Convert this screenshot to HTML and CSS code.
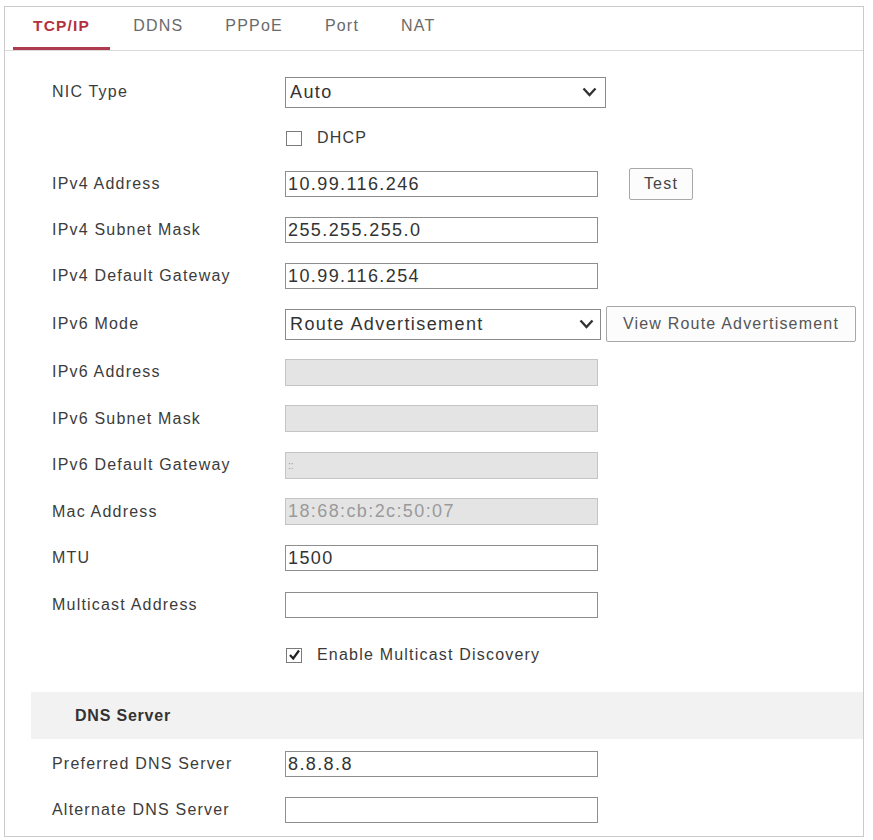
FILE: index.html
```html
<!DOCTYPE html>
<html lang="en">
<head>
<meta charset="utf-8">
<title>TCP/IP</title>
<link rel="stylesheet" href="styles.css">
</head>
<body>
<div class="panel">
  <nav class="tabs">
    <span class="tab active">TCP/IP</span>
    <span class="tab">DDNS</span>
    <span class="tab">PPPoE</span>
    <span class="tab">Port</span>
    <span class="tab">NAT</span>
  </nav>
  <form class="form">
    <div class="row">
      <label class="label">NIC Type</label>
      <div class="select">
        <span>Auto</span>
        <svg class="chev" width="15" height="10" viewBox="0 0 15 10"><polyline points="1.5,1.5 7.5,8 13.5,1.5" fill="none" stroke="#333" stroke-width="2.4"/></svg>
      </div>
    </div>
    <div class="row">
      <span class="label"></span>
      <span class="check"></span><span class="check-text">DHCP</span>
    </div>
    <div class="row">
      <label class="label">IPv4 Address</label>
      <input class="field" type="text" value="10.99.116.246">
      <button type="button" class="btn btn-test">Test</button>
    </div>
    <div class="row">
      <label class="label">IPv4 Subnet Mask</label>
      <input class="field" type="text" value="255.255.255.0">
    </div>
    <div class="row">
      <label class="label">IPv4 Default Gateway</label>
      <input class="field" type="text" value="10.99.116.254">
    </div>
    <div class="row row-tall">
      <label class="label">IPv6 Mode</label>
      <div class="select select-v6">
        <span>Route Advertisement</span>
        <svg class="chev" width="15" height="10" viewBox="0 0 15 10"><polyline points="1.5,1.5 7.5,8 13.5,1.5" fill="none" stroke="#333" stroke-width="2.4"/></svg>
      </div>
      <button type="button" class="btn btn-view">View Route Advertisement</button>
    </div>
    <div class="row row-mid">
      <label class="label">IPv6 Address</label>
      <input class="field" type="text" value="" disabled>
    </div>
    <div class="row row-mid">
      <label class="label">IPv6 Subnet Mask</label>
      <input class="field" type="text" value="" disabled>
    </div>
    <div class="row row-mid">
      <label class="label">IPv6 Default Gateway</label>
      <input class="field field-tiny" type="text" value="::" disabled>
    </div>
    <div class="row row-mid">
      <label class="label">Mac Address</label>
      <input class="field" type="text" value="18:68:cb:2c:50:07" disabled>
    </div>
    <div class="row row-mid">
      <label class="label">MTU</label>
      <input class="field" type="text" value="1500">
    </div>
    <div class="row row-mid">
      <label class="label">Multicast Address</label>
      <input class="field" type="text" value="">
    </div>
    <div class="row row-enable">
      <span class="label"></span>
      <span class="check checked"><svg width="13" height="12" viewBox="0 0 13 12"><polyline points="2,6 5.2,9.5 11,1.5" fill="none" stroke="#222" stroke-width="2.2"/></svg></span><span class="check-text">Enable Multicast Discovery</span>
    </div>
    <div class="section">DNS Server</div>
    <div class="row">
      <label class="label">Preferred DNS Server</label>
      <input class="field" type="text" value="8.8.8.8">
    </div>
    <div class="row">
      <label class="label">Alternate DNS Server</label>
      <input class="field" type="text" value="">
    </div>
  </form>
</div>
</body>
</html>
```

FILE: styles.css
```css
* { box-sizing: border-box; }

html, body {
  margin: 0;
  padding: 0;
  background: #ffffff;
}

body {
  font-family: "Liberation Sans", Arial, sans-serif;
  color: #3a3a3a;
}

.panel {
  margin: 6px 0 0 4px;
  width: 860px;
  height: 831px;
  border: 1px solid #cacaca;
  display: flex;
  flex-direction: column;
}

.tabs {
  display: flex;
  gap: 4px;
  padding-left: 8px;
  height: 44px;
  border-bottom: 1px solid #d9d9d9;
}

.tab {
  display: flex;
  align-items: center;
  padding: 0 19px 3px;
  font-size: 16px;
  letter-spacing: 1.2px;
  color: #6a6a6a;
  border-bottom: 3px solid transparent;
}

.tab.active {
  color: #b3313f;
  font-weight: bold;
  font-size: 15.5px;
  padding: 0 20px 3px;
  border-bottom-color: #b03a4e;
}

.form {
  padding: 18px 0 0 47px;
  margin: 0;
}

.row {
  display: flex;
  align-items: center;
  height: 46px;
}

.row-tall { height: 50px; }
.row-mid { height: 46.5px; }
.row-enable { height: 54px; }

.label {
  width: 233px;
  flex: none;
  font-size: 16px;
  letter-spacing: 1.2px;
  color: #3c3c3c;
}

.select {
  width: 321px;
  height: 31px;
  border: 1px solid #8a8a8a;
  display: flex;
  align-items: center;
  justify-content: space-between;
  padding: 0 8px 0 4px;
  font-size: 18px;
  letter-spacing: 1.4px;
  color: #333;
  background: #fff;
}

.select-v6 {
  width: 316px;
  padding-right: 6px;
}

.field {
  width: 313px;
  height: 26px;
  border: 1px solid #8e8e8e;
  padding: 0 2px;
  margin: 0;
  font-family: "Liberation Sans", Arial, sans-serif;
  font-size: 18px;
  letter-spacing: 1.4px;
  color: #333;
  background: #fff;
  outline: none;
}

.field:disabled {
  background: #e4e4e4;
  border-color: #c4c4c4;
  color: #9a9a9a;
  height: 27px;
}

.field-tiny {
  font-size: 10px;
  letter-spacing: 0;
}

.btn {
  font-family: "Liberation Sans", Arial, sans-serif;
  font-size: 16px;
  letter-spacing: 1.2px;
  color: #444;
  background: #fcfcfc;
  border: 1px solid #a8a8a8;
  border-radius: 2px;
  padding: 0;
}

.btn-test {
  margin-left: 31px;
  width: 64px;
  height: 32px;
}

.btn-view {
  margin-left: 5px;
  width: 250px;
  height: 36px;
  color: #555;
}

.check {
  width: 16px;
  height: 15px;
  margin-left: 1px;
  border: 1px solid #7a7a7a;
  background: #fff;
  display: flex;
  align-items: center;
  justify-content: center;
  flex: none;
}

.check svg { display: block; }

.check-text {
  margin-left: 15px;
  font-size: 16px;
  letter-spacing: 1.2px;
  color: #3a3a3a;
}

.section {
  margin: 10px 0 2px -21px;
  height: 47px;
  background: #f2f2f2;
  display: flex;
  align-items: center;
  padding-left: 44px;
  font-size: 16px;
  font-weight: bold;
  letter-spacing: 0.8px;
  color: #333;
}
```
